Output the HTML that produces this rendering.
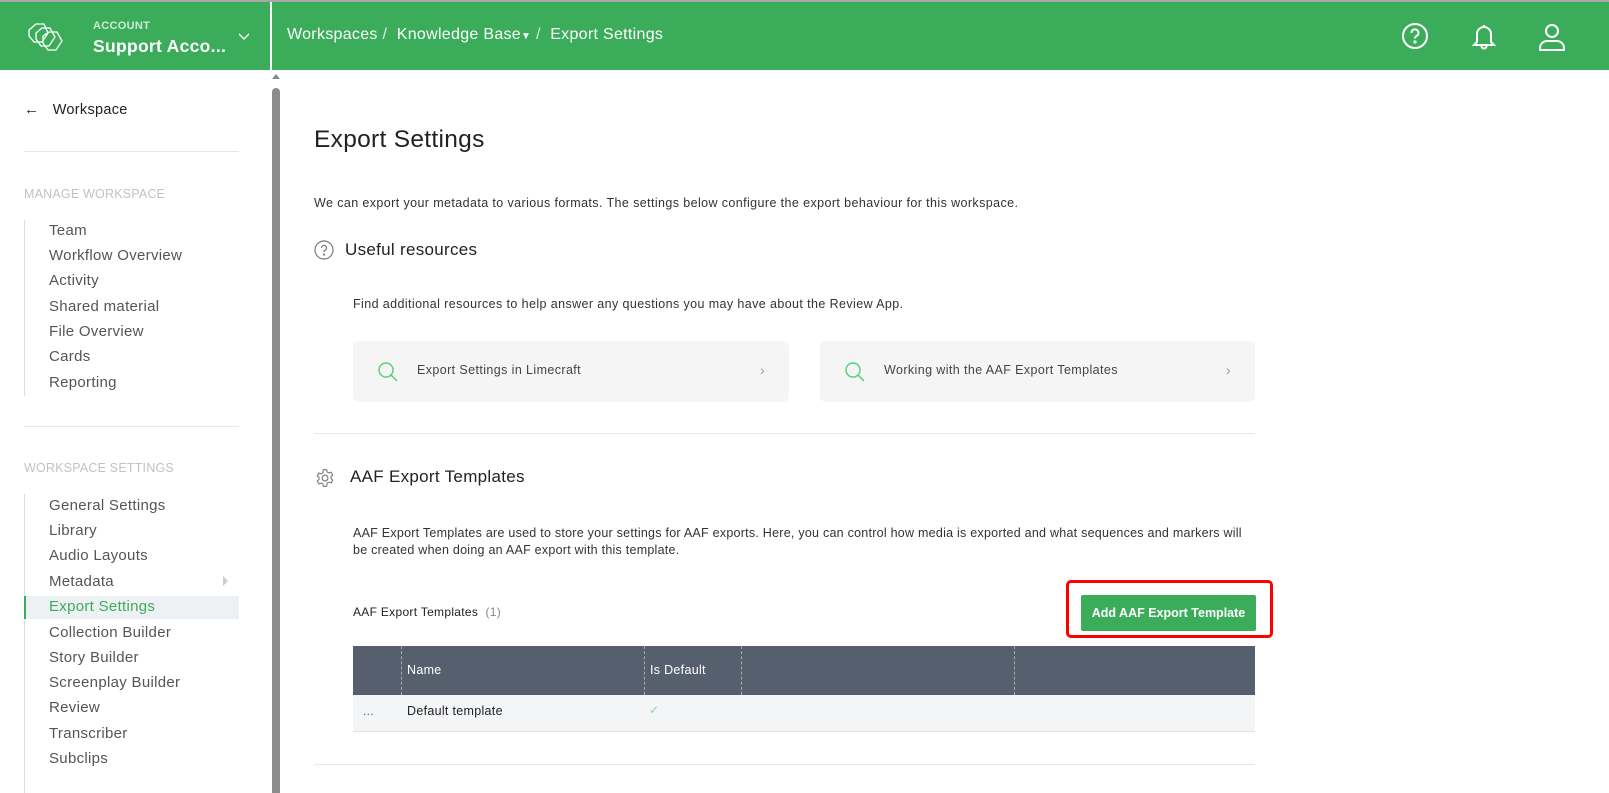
<!DOCTYPE html>
<html><head><meta charset="utf-8"><style>
*{margin:0;padding:0;box-sizing:border-box}
body{width:1609px;height:793px;overflow:hidden;background:#fff;font-family:"Liberation Sans",sans-serif;color:#222;position:relative;letter-spacing:.3px}
.a{position:absolute;white-space:nowrap}
#top{position:absolute;left:0;top:0;width:1609px;height:70px;background:#3bad5a;border-top:2px solid #a8a8a8}
.nav{font-size:15px;color:#555;left:49px}
.navl{position:absolute;left:24px;width:1px;background:#ddd}
.sec{font-size:12.5px;color:#c2c2c2;left:24px;letter-spacing:.2px}
.card{position:absolute;top:341px;height:61px;width:436px;background:#f5f5f5;border-radius:6px}
.card span{position:absolute;left:64px;top:22px;font-size:12.5px;color:#444;letter-spacing:.4px}
.card i{position:absolute;right:24px;top:21px;font-style:normal;color:#999;font-size:14px}
.hr{position:absolute;left:314px;width:941px;height:1px;background:#e6e6e6}
</style></head><body>
<div id="top">
<svg class="a" style="left:26px;top:19px" width="40" height="34" viewBox="0 0 40 34" fill="none" stroke="#fff" stroke-width="1.3"><path d="M3 9 L10 3 L18 3 L22 12 L16 21 L8 21 L3 15 Z"/><path d="M10 12 L16 7 L24 7 L29 16 L23 25 L15 25 L10 18 Z"/><path d="M17 15 L23 11 L31 11 L36 20 L30 29 L22 29 L17 22 Z"/></svg>
<div class="a" style="left:93px;top:18px;font-size:11px;font-weight:bold;color:#cfe9d6">ACCOUNT</div>
<div class="a" style="left:93px;top:34px;font-size:17.5px;font-weight:bold;color:#fff">Support Acco...</div>
<svg class="a" style="left:238px;top:31px" width="12" height="8" viewBox="0 0 12 8"><path d="M1 1l5 5 5-5" stroke="#fff" fill="none" stroke-width="1.3"/></svg>
<div class="a" style="left:270px;top:0;width:2px;height:68px;background:#fff"></div>
<div class="a" style="left:287px;top:24px;font-size:16px;color:#fff">Workspaces <span style="opacity:.8">/</span> &nbsp;Knowledge Base<span style="font-size:10px">&#9660;</span> <span style="opacity:.8">/</span> &nbsp;Export Settings</div>
<svg class="a" style="left:1401px;top:20px" width="28" height="28" viewBox="0 0 28 28" fill="none" stroke="#fff" stroke-width="2"><circle cx="14" cy="14" r="12"/><path d="M10.5 11a3.5 3.5 0 1 1 5 3c-1.2.6-1.5 1.3-1.5 2.5"/><circle cx="14" cy="20" r=".6" fill="#fff"/></svg>
<svg class="a" style="left:1470px;top:20px" width="28" height="30" viewBox="0 0 28 30" fill="none" stroke="#fff" stroke-width="2"><path d="M14 3v2M7 20V12a7 7 0 0 1 14 0v8l3 3H4z"/><path d="M11.5 24a2.5 2.5 0 0 0 5 0"/></svg>
<svg class="a" style="left:1538px;top:20px" width="28" height="30" viewBox="0 0 28 30" fill="none" stroke="#fff" stroke-width="2"><circle cx="14" cy="9" r="6"/><path d="M2 28v-2a7 7 0 0 1 7-7h10a7 7 0 0 1 7 7v2z"/></svg>
</div>
<div class="a" style="left:270px;top:70px;width:12px;height:723px;background:#fff"></div>
<div class="a" style="left:272px;top:88px;width:8px;height:705px;background:#8c8c8c;border-radius:4px 4px 0 0"></div>
<div class="a" style="left:272px;top:74px;width:0;height:0;border-left:4px solid transparent;border-right:4px solid transparent;border-bottom:5px solid #888"></div>
<div class="a" style="left:24px;top:101px;font-size:15px;color:#222">&#8592;&nbsp;&nbsp; <span style="font-size:14.5px">Workspace</span></div>
<div class="a" style="left:24px;top:151px;width:215px;height:1px;background:#e6e6e6"></div>
<div class="a sec" style="top:187px">MANAGE WORKSPACE</div>
<div class="navl" style="top:220px;height:176px"></div>
<div class="a nav" style="top:222px">Team</div>
<div class="a nav" style="top:247px">Workflow Overview</div>
<div class="a nav" style="top:272px">Activity</div>
<div class="a nav" style="top:298px">Shared material</div>
<div class="a nav" style="top:323px">File Overview</div>
<div class="a nav" style="top:348px">Cards</div>
<div class="a nav" style="top:374px">Reporting</div>
<div class="a" style="left:24px;top:426px;width:215px;height:1px;background:#e6e6e6"></div>
<div class="a sec" style="top:461px">WORKSPACE SETTINGS</div>
<div class="navl" style="top:494px;height:299px"></div>
<div class="a nav" style="top:497px">General Settings</div>
<div class="a nav" style="top:522px">Library</div>
<div class="a nav" style="top:547px">Audio Layouts</div>
<div class="a nav" style="top:573px">Metadata</div>
<div class="a" style="left:223px;top:576px;border-top:5px solid transparent;border-bottom:5px solid transparent;border-left:5px solid #ccc"></div>
<div class="a" style="left:24px;top:596px;width:215px;height:23px;background:#eef1f3;border-left:2px solid #3bad5a"></div>
<div class="a nav" style="top:598px;color:#3bad5a">Export Settings</div>
<div class="a nav" style="top:624px">Collection Builder</div>
<div class="a nav" style="top:649px">Story Builder</div>
<div class="a nav" style="top:674px">Screenplay Builder</div>
<div class="a nav" style="top:699px">Review</div>
<div class="a nav" style="top:725px">Transcriber</div>
<div class="a nav" style="top:750px">Subclips</div>
<div class="a" style="left:314px;top:126px;font-size:24.5px;color:#222">Export Settings</div>
<div class="a" style="left:314px;top:196px;font-size:12.5px;color:#333;letter-spacing:.4px">We can export your metadata to various formats. The settings below configure the export behaviour for this workspace.</div>
<svg class="a" style="left:314px;top:240px" width="20" height="20" viewBox="0 0 20 20" fill="none" stroke="#777" stroke-width="1.2"><circle cx="10" cy="10" r="9"/><path d="M7.5 8a2.5 2.5 0 1 1 3.5 2.2c-.8.4-1 .9-1 1.8"/><circle cx="10" cy="14.5" r=".5" fill="#777"/></svg>
<div class="a" style="left:345px;top:240px;font-size:17px;color:#222">Useful resources</div>
<div class="a" style="left:353px;top:297px;font-size:12.5px;color:#333;letter-spacing:.4px">Find additional resources to help answer any questions you may have about the Review App.</div>
<div class="card" style="left:353px"><svg class="a" style="left:24px;top:20px" width="22" height="22" viewBox="0 0 22 22" fill="none" stroke="#52d07a" stroke-width="1.4"><circle cx="9" cy="9" r="7"/><path d="M14 14l6 6"/></svg><span>Export Settings in Limecraft</span><i>&#8250;</i></div>
<div class="card" style="left:820px;width:435px"><svg class="a" style="left:24px;top:20px" width="22" height="22" viewBox="0 0 22 22" fill="none" stroke="#52d07a" stroke-width="1.4"><circle cx="9" cy="9" r="7"/><path d="M14 14l6 6"/></svg><span>Working with the AAF Export Templates</span><i>&#8250;</i></div>
<div class="hr" style="top:433px"></div>
<svg class="a" style="left:315px;top:468px" width="20" height="20" viewBox="0 0 24 24" fill="none" stroke="#777" stroke-width="1.3"><circle cx="12" cy="12" r="3.5"/><path d="M10 2h4l.6 2.8 2 1.1 2.7-.9 2 3.4-2.1 1.9v2.3l2.1 1.9-2 3.4-2.7-.9-2 1.1L14 22h-4l-.6-2.8-2-1.1-2.7.9-2-3.4 2.1-1.9v-2.3L2.7 9.5l2-3.4 2.7.9 2-1.1z"/></svg>
<div class="a" style="left:350px;top:467px;font-size:17px;color:#222">AAF Export Templates</div>
<div class="a" style="left:353px;top:525px;font-size:12.5px;color:#333;line-height:17px;white-space:normal;width:905px;letter-spacing:.25px">AAF Export Templates are used to store your settings for AAF exports. Here, you can control how media is exported and what sequences and markers will be created when doing an AAF export with this template.</div>
<div class="a" style="left:353px;top:605px;font-size:12px;color:#222">AAF Export Templates &nbsp;<span style="color:#888">(1)</span></div>
<div class="a" style="left:1066px;top:580px;width:207px;height:58px;border:3px solid #f00;border-radius:5px"></div>
<div class="a" style="left:1081px;top:595px;width:175px;height:36px;background:#3bad5a;border-radius:2px;color:#fff;font-size:12.5px;text-align:center;line-height:36px;font-weight:bold;letter-spacing:0">Add AAF Export Template</div>
<div class="a" style="left:353px;top:646px;width:902px;height:49px;background:#555f6d"></div>
<div class="a" style="left:401px;top:646px;height:49px;border-left:1px dashed #aaa"></div>
<div class="a" style="left:644px;top:646px;height:49px;border-left:1px dashed #aaa"></div>
<div class="a" style="left:741px;top:646px;height:49px;border-left:1px dashed #aaa"></div>
<div class="a" style="left:1014px;top:646px;height:49px;border-left:1px dashed #aaa"></div>
<div class="a" style="left:407px;top:663px;font-size:12.5px;color:#fff">Name</div>
<div class="a" style="left:650px;top:663px;font-size:12.5px;color:#fff">Is Default</div>
<div class="a" style="left:353px;top:695px;width:902px;height:37px;background:#f4f5f7;border-bottom:1px solid #e3e3e3"></div>
<div class="a" style="left:363px;top:704px;font-size:12px;color:#555">...</div>
<div class="a" style="left:407px;top:704px;font-size:12.5px;color:#222">Default template</div>
<div class="a" style="left:649px;top:703px;font-size:12px;color:#8fd6a3">&#10003;</div>
<div class="hr" style="top:764px"></div>
</body></html>
